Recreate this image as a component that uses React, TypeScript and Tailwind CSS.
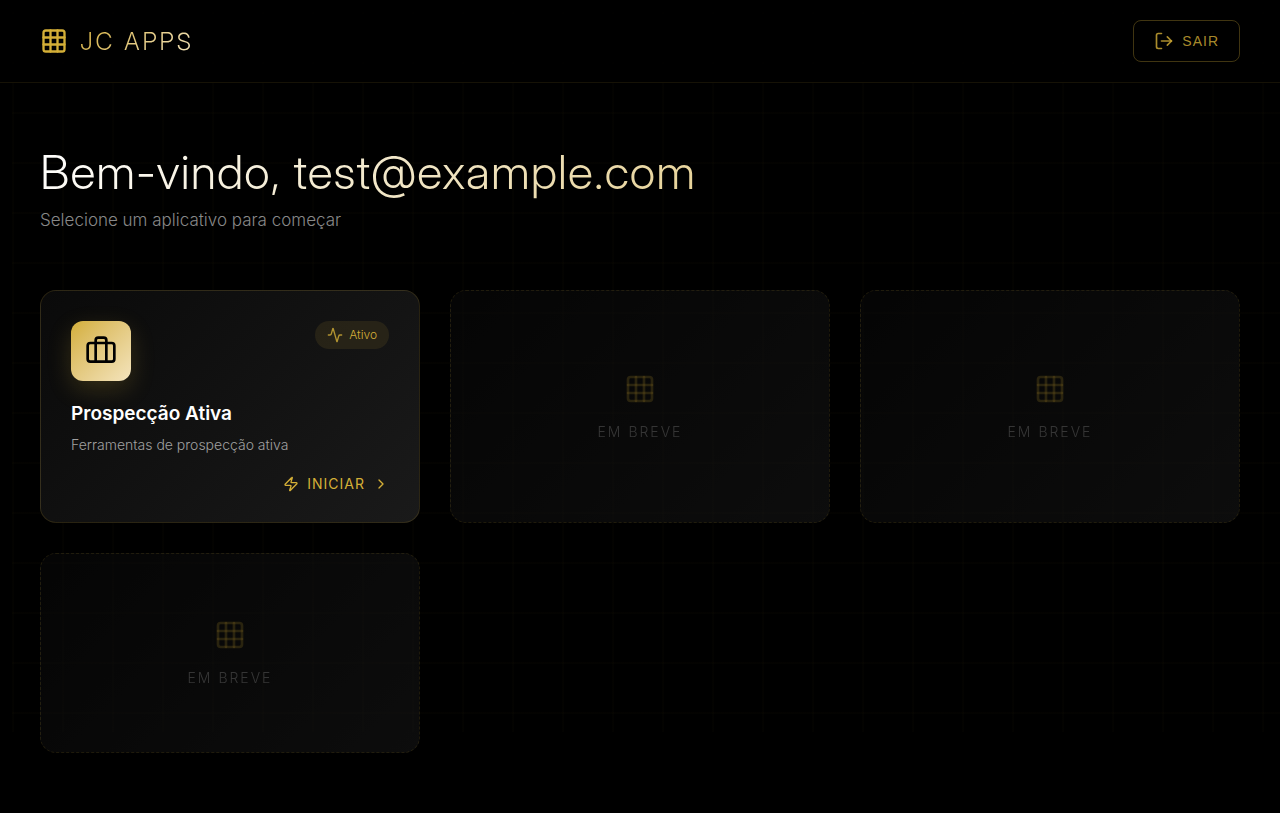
import { Activity, Briefcase, ChevronRight, Grid3x3, LogOut, Zap } from "lucide-react";

function ComingSoonCard() {
  return (
    <article className="flex min-h-[200px] flex-col items-center justify-center gap-[18px] rounded-2xl border border-dashed border-[#d4af37]/25 bg-linear-135 from-[#0a0a0a] to-[#1a1a1a] opacity-50">
      <Grid3x3 aria-hidden="true" className="size-8 text-[#d4af37]/35" />
      <p className="text-sm leading-[18px] font-light tracking-[2px] text-[#6b6b6b]">EM BREVE</p>
    </article>
  );
}

function ActiveCard() {
  return (
    <article className="rounded-2xl border border-[#d4af37]/15 bg-linear-135 from-[#0a0a0a] to-[#1a1a1a] p-[30px]">
      <div className="flex items-start justify-between">
        <div className="flex size-[60px] items-center justify-center rounded-xl bg-linear-135 from-[#d4af37] to-[#f4e4bc] text-black shadow-[0_8px_24px_rgba(212,175,55,0.2)]">
          <Briefcase aria-hidden="true" className="size-8" />
        </div>
        <span className="flex h-7 items-center gap-1.5 rounded-full bg-[#d4af37]/10 px-3 text-xs font-light text-[#d4af37]">
          <Activity aria-hidden="true" className="size-4 opacity-80" />
          Ativo
        </span>
      </div>
      <h2 className="mt-5 text-[19px] leading-[26px] font-semibold text-white">Prospecção Ativa</h2>
      <p className="mt-1.5 text-sm leading-[23px] font-light text-[#a0a0a0]">Ferramentas de prospecção ativa</p>
      <div className="mt-5 flex justify-end">
        <button
          type="button"
          className="flex items-center gap-2 text-sm leading-4 tracking-[1px] text-[#d4af37]"
        >
          <Zap aria-hidden="true" className="size-4" />
          INICIAR
          <ChevronRight aria-hidden="true" className="size-4" />
        </button>
      </div>
    </article>
  );
}

export default function App() {
  return (
    <div className="relative min-h-screen bg-black font-[Inter,sans-serif] text-white">
      <div className="pointer-events-none absolute top-3 right-0 left-3 h-[720px] bg-[linear-gradient(rgba(212,175,55,0.014)_2px,transparent_2px),linear-gradient(90deg,rgba(212,175,55,0.014)_2px,transparent_2px)] bg-[size:50px_50px]" />
      <header className="relative flex items-center justify-between border-b border-[#d4af37]/10 bg-black/80 px-10 py-5">
        <div className="flex items-center gap-3">
          <Grid3x3 aria-hidden="true" className="size-7 text-[#d4af37]" />
          <span className="bg-linear-135 from-[#d4af37] to-[#f4e4bc] bg-clip-text pt-0.5 font-['Inter_Display',Inter,sans-serif] text-2xl font-light tracking-[3px] text-transparent">
            JC APPS
          </span>
        </div>
        <button
          type="button"
          className="flex items-center gap-2 rounded-lg border border-[#d4af37]/30 px-5 py-2.5 font-['Liberation_Sans',sans-serif] text-sm leading-5 tracking-[1px] text-[#d4af37]/80"
        >
          <LogOut aria-hidden="true" className="size-5" />
          SAIR
        </button>
      </header>
      <main className="relative px-10 py-[60px]">
        <h1 className="bg-linear-135 from-white to-[#d4af37] bg-clip-text font-['Inter_Display',Inter,sans-serif] text-[47px] leading-[58px] font-light tracking-[1px] text-transparent">
          Bem-vindo, test@example.com
        </h1>
        <p className="mt-2 text-[17px] leading-[22px] font-light text-[#888888]">
          Selecione um aplicativo para começar
        </p>
        <section className="mt-[59px] grid grid-cols-[repeat(auto-fill,minmax(350px,1fr))] gap-[30px]">
          <ActiveCard />
          <ComingSoonCard />
          <ComingSoonCard />
          <ComingSoonCard />
        </section>
      </main>
    </div>
  );
}
